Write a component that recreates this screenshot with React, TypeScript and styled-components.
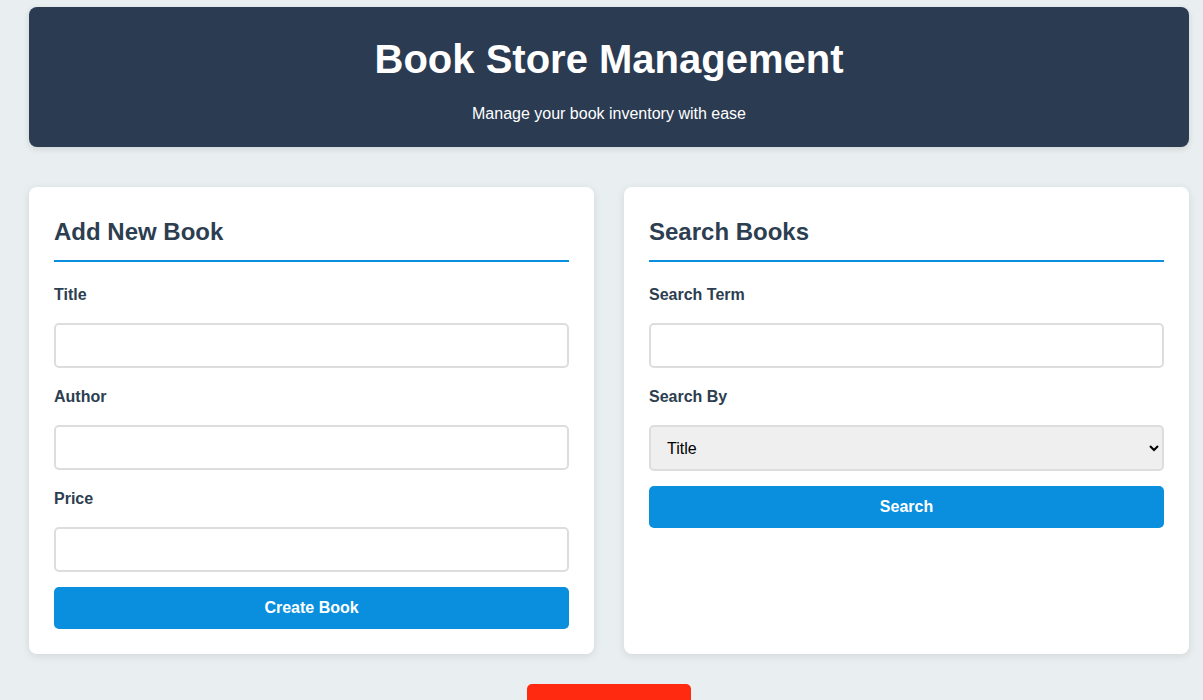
import React from "react";
import styled, { createGlobalStyle } from "styled-components";

const GlobalStyle = createGlobalStyle`
  html, body {
    margin: 0;
    padding: 0;
    background: #e9eff0;
    font-family: "Liberation Sans", Arial, sans-serif;
    color: #2c3e50;
  }
  * { box-sizing: border-box; }
`;

const Page = styled.div`
  width: 1160px;
  margin: 0 0 0 29px;
  padding: 7px 0 0;
`;

const Header = styled.header`
  background: #2a3b52;
  color: #ffffff;
  border-radius: 8px;
  height: 140px;
  padding-top: 29px;
  text-align: center;
  box-shadow: 0 2px 6px rgba(0, 0, 0, 0.12);
`;

const Title = styled.h1`
  margin: 0;
  font-size: 40px;
  line-height: 46px;
  font-weight: 700;
`;

const Subtitle = styled.p`
  margin: 23px 0 0;
  font-size: 16px;
  line-height: 18px;
`;

const Grid = styled.div`
  display: grid;
  grid-template-columns: 1fr 1fr;
  gap: 30px;
  margin-top: 40px;
`;

const Card = styled.section`
  background: #ffffff;
  border-radius: 8px;
  padding: 25px 25px;
  height: 467px;
  box-shadow: 0 2px 8px rgba(0, 0, 0, 0.1);
  display: flex;
  flex-direction: column;
`;

const CardTitle = styled.h2`
  margin: 0 0 24px;
  padding: 6px 0 14px;
  font-size: 24px;
  line-height: 28px;
  font-weight: 700;
  color: #2c3e50;
  border-bottom: 2px solid #0a8fdf;
`;

const Label = styled.label`
  display: block;
  font-size: 16px;
  line-height: 18px;
  font-weight: 700;
  color: #2c3e50;
  margin-bottom: 19px;
`;

const Field = styled.div`
  margin-bottom: 20px;
  &:last-of-type { margin-bottom: 15px; }
`;

const Input = styled.input`
  display: block;
  width: 100%;
  height: 45px;
  border: 2px solid #dddddd;
  border-radius: 5px;
  padding: 0 12px;
  font-family: "Liberation Sans", Arial, sans-serif;
  font-size: 16px;
  background: #ffffff;
  outline: none;
`;

const Select = styled.select`
  display: block;
  width: 100%;
  height: 46px;
  border: 2px solid #dddddd;
  border-radius: 5px;
  padding: 0 12px;
  font-family: "Liberation Sans", Arial, sans-serif;
  font-size: 16px;
  color: #000000;
  background: #efefef;
  outline: none;
`;

const Button = styled.button`
  display: block;
  width: 100%;
  height: 42px;
  border: none;
  border-radius: 5px;
  background: #0a8fdf;
  color: #ffffff;
  font-family: "Liberation Sans", Arial, sans-serif;
  font-size: 16px;
  font-weight: 700;
  cursor: pointer;
`;

const Footer = styled.div`
  display: flex;
  justify-content: center;
  margin-top: 30px;
`;

const DangerButton = styled.button`
  width: 164px;
  padding: 16px 10px 14px;
  line-height: 18px;
  border: none;
  border-radius: 5px;
  background: #ff2a10;
  color: #ffffff;
  font-family: "Liberation Sans", Arial, sans-serif;
  font-size: 16px;
  font-weight: 700;
`;

export default function App() {
  return (
    <>
      <GlobalStyle />
      <Page>
        <Header>
          <Title>Book Store Management</Title>
          <Subtitle>Manage your book inventory with ease</Subtitle>
        </Header>
        <Grid>
          <Card>
            <CardTitle>Add New Book</CardTitle>
            <Field>
              <Label>Title</Label>
              <Input type="text" />
            </Field>
            <Field>
              <Label>Author</Label>
              <Input type="text" />
            </Field>
            <Field>
              <Label>Price</Label>
              <Input type="number" />
            </Field>
            <Button>Create Book</Button>
          </Card>
          <Card>
            <CardTitle>Search Books</CardTitle>
            <Field>
              <Label>Search Term</Label>
              <Input type="text" />
            </Field>
            <Field>
              <Label>Search By</Label>
              <Select defaultValue="title">
                <option value="title">Title</option>
                <option value="author">Author</option>
              </Select>
            </Field>
            <Button>Search</Button>
          </Card>
        </Grid>
        <Footer>
          <DangerButton>Show All Books</DangerButton>
        </Footer>
      </Page>
    </>
  );
}
